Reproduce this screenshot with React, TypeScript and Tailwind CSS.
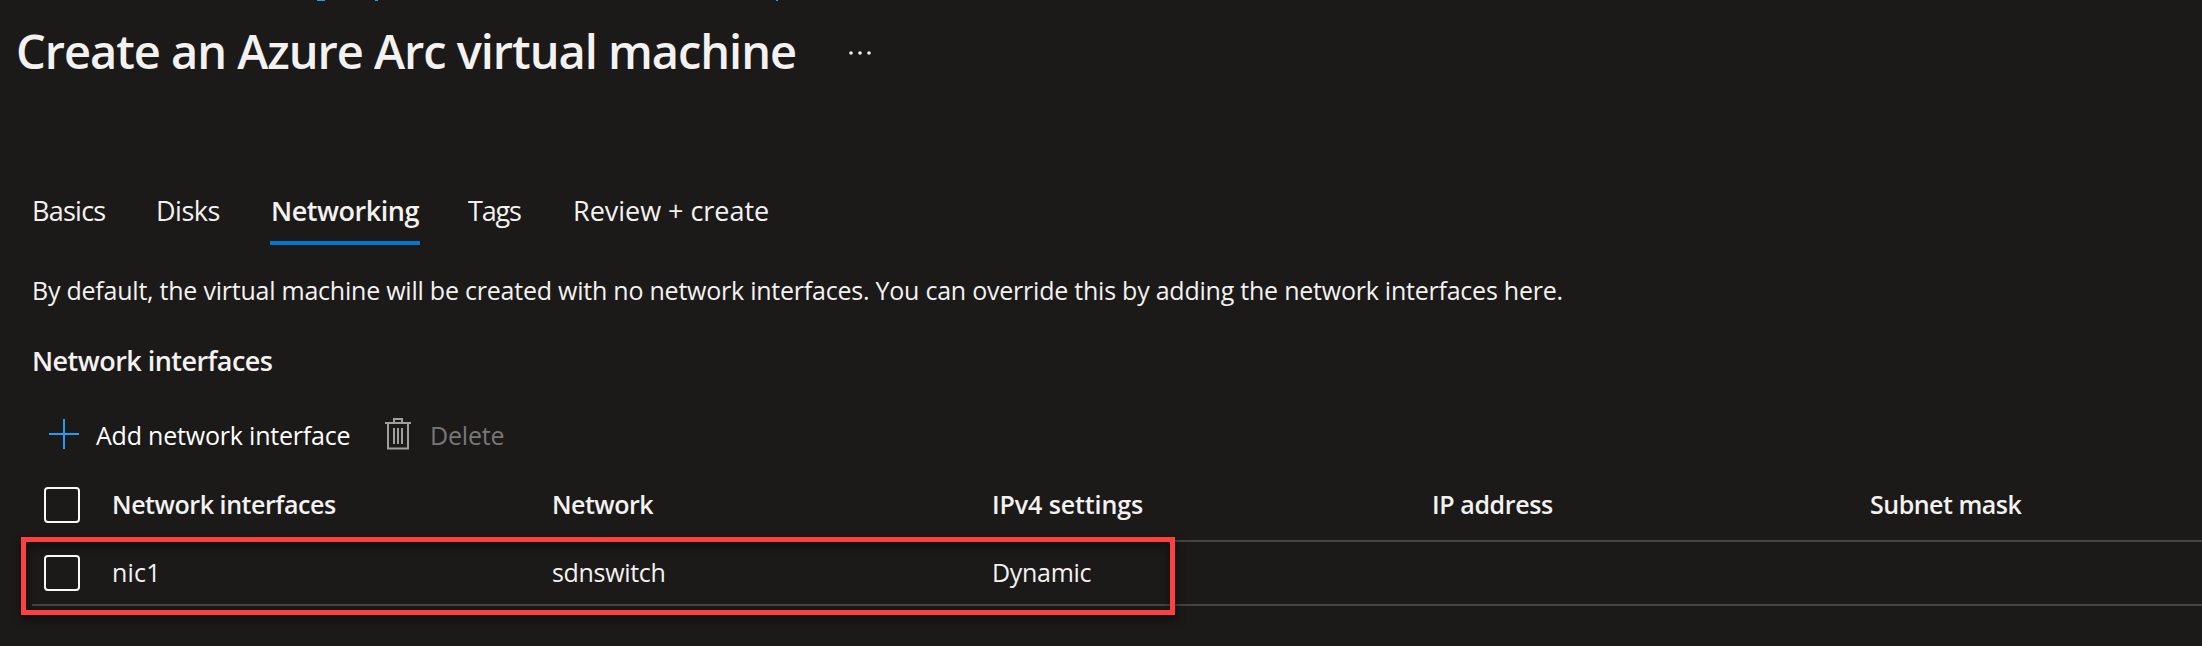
const tabs = [
  { label: "Basics", cls: "w-[124px] tracking-[-0.74px]" },
  { label: "Disks", cls: "w-[114px] tracking-[-0.5px]" },
  { label: "Networking", cls: "w-[150px] pl-px border-b-4 border-[#0078d4] font-semibold tracking-[-0.47px]" },
  { label: "Tags", cls: "ml-[48px] w-[105px] tracking-[-1.2px]" },
  { label: "Review + create", cls: "tracking-[-0.03px]" },
];

const columns = [
  { label: "Network interfaces", value: "nic1", head: "tracking-[-0.44px]", cell: "tracking-[0.2px]" },
  { label: "Network", value: "sdnswitch", head: "tracking-[-0.5px]", cell: "tracking-[-0.32px]" },
  { label: "IPv4 settings", value: "Dynamic", head: "tracking-[-0.1px]", cell: "tracking-[-0.3px]" },
  { label: "IP address", value: "", head: "tracking-[-0.39px]", cell: "" },
  { label: "Subnet mask", value: "", head: "tracking-[-0.49px]", cell: "" },
];

const rowGrid = "grid grid-cols-[80px_440px_440px_440px_438px_1fr] border-b-2 border-[#454443]";

function Checkbox() {
  return (
    <div className="pl-3">
      <div role="checkbox" aria-checked="false" className="size-9 rounded-[4px] border-2 border-[#faf9f8]" />
    </div>
  );
}

function PlusIcon() {
  return (
    <svg width="30" height="30" viewBox="0 0 30 30" className="mt-px" stroke="#2899f5" strokeWidth="2">
      <path d="M15 0v30M0 15h30" />
    </svg>
  );
}

function TrashIcon() {
  return (
    <svg width="26" height="32" viewBox="0 0 26 32" fill="none" stroke="#a19f9d" strokeWidth="2">
      <path d="M0 5h26M9 5V1h8v4M3 5v25.5h20V5M9 10v16M13 10v16M17 10v16" />
    </svg>
  );
}

export default function App() {
  return (
    <div className="relative h-[646px] w-[2202px] overflow-hidden bg-[#1b1a19] font-['Open_Sans',sans-serif] text-[25px] leading-[34px] whitespace-nowrap text-[#f3f2f1]">
      <div className="flex h-px">
        <span className="ml-[317px] w-2 bg-[#2899f5]" />
        <span className="ml-[50px] w-[3px] bg-[#2899f5]" />
        <span className="ml-[398px] w-[2px] bg-[#2899f5]" />
      </div>

      <header className="flex h-[192px] items-start pt-5 pl-4">
        <h1 className="w-[833px] text-[47px] leading-[60px] font-semibold tracking-[-1.04px]">
          Create an Azure Arc virtual machine
        </h1>
        <svg width="22" height="4" viewBox="0 0 22 4" className="mt-[30px]" fill="#f3f2f1">
          <circle cx="2" cy="2" r="1.8" />
          <circle cx="11" cy="2" r="1.8" />
          <circle cx="20" cy="2" r="1.8" />
        </svg>
      </header>

      <main className="pl-8">
        <nav className="flex h-[52px] text-[27px] leading-9">
          {tabs.map((t) => (
            <div key={t.label} className={t.cls}>{t.label}</div>
          ))}
        </nav>

        <p className="mt-7 tracking-[-0.23px]">
          By default, the virtual machine will be created with no network interfaces. You can override this by adding the network interfaces here.
        </p>
        <h2 className="mt-9 text-[27px] leading-9 font-semibold tracking-[-0.54px]">Network interfaces</h2>

        <div className="mt-[39px] flex h-[52px] items-start pl-[17px]">
          <PlusIcon />
          <span className="ml-[17px] w-[289px] tracking-[-0.2px] text-white">Add network interface</span>
          <TrashIcon />
          <span className="ml-[19px] tracking-[-0.19px] text-[#797775]">Delete</span>
        </div>

        <div className={`${rowGrid} h-[72px] pt-[17px] font-semibold`}>
          <Checkbox />
          {columns.map((c) => (
            <div key={c.label} className={c.head}>{c.label}</div>
          ))}
        </div>
        <div className={`${rowGrid} h-16 pt-[13px]`}>
          <Checkbox />
          {columns.map((c) => (
            <div key={c.label} className={c.cell}>{c.value}</div>
          ))}
        </div>
      </main>

      <div className="absolute top-[537px] left-[21px] h-[78px] w-[1154px] border-[5px] border-[#ff4040] drop-shadow-[1px_4px_4px_rgba(0,0,0,0.6)]" />
    </div>
  );
}
